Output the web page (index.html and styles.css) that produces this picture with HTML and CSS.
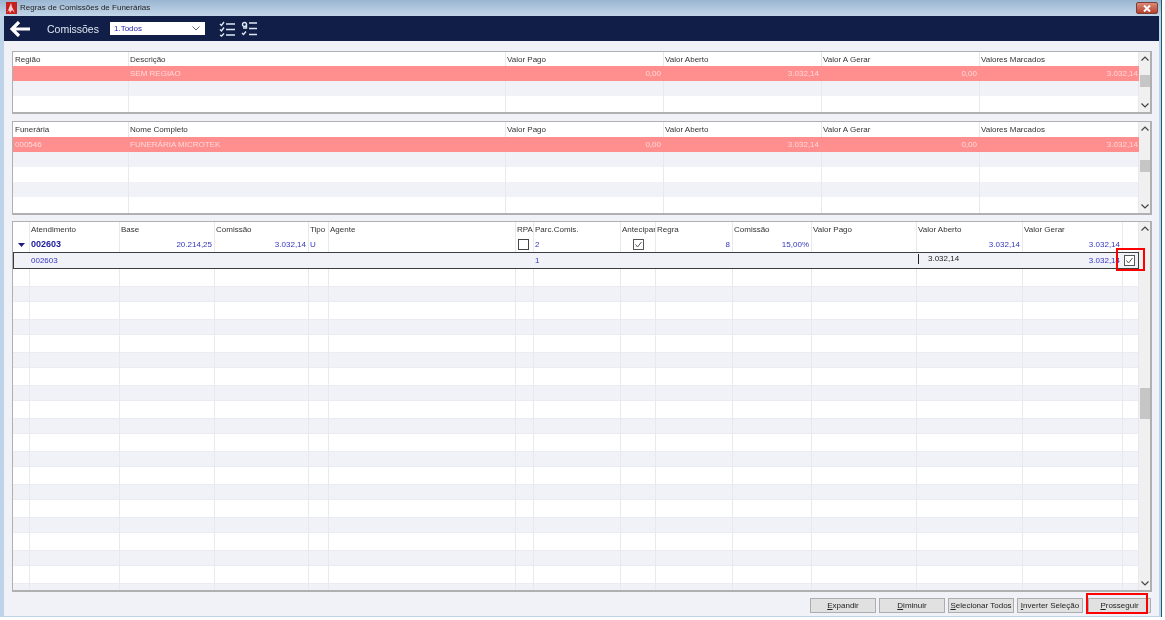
FILE: index.html
```html
<!DOCTYPE html>
<html lang="pt-BR">
<head>
<meta charset="utf-8">
<title>Regras de Comissões de Funerárias</title>
<link rel="stylesheet" href="styles.css">
</head>
<body>
<div class="window">
  <header class="titlebar">
    <svg class="appicon" width="11" height="12" viewBox="0 0 11 12"><rect width="11" height="12" fill="#c8201c"/><path d="M1 11 5 1l1 4 3 6-3-3-2 3-1-3z" fill="#f4d0d0"/></svg>
    <span class="title">Regras de Comissões de Funerárias</span>
    <span class="close"><svg width="8" height="7" viewBox="0 0 8 7"><path d="M1 .5 7 6.500M7 .5 1 6.500" stroke="#fff" stroke-width="2"/></svg></span>
  </header>
  <nav class="toolbar">
    <svg class="back" width="20" height="16" viewBox="0 0 20 16"><path d="M9 1 2 8l7 7M2 8h18" fill="none" stroke="#fff" stroke-width="3.200"/></svg>
    <span class="heading">Comissões</span>
    <div class="select"><span>1.Todos</span><svg width="8" height="5" viewBox="0 0 8 5"><path d="M.5.5 4 4 7.500.5" fill="none" stroke="#666"/></svg></div>
    <svg class="tool tool-a" width="16" height="16" viewBox="0 0 16 16" fill="none" stroke="#dfe6f2" stroke-width="1.400"><path d="M1 3l1.500 1.500L5 1M1 8.500 2.500 10 5 6.500M1 14l1.500 1L5 12.500M7 3h9M7 8.500h9M7 14h9"/></svg>
    <svg class="tool" width="16" height="16" viewBox="0 0 16 16" fill="none" stroke="#dfe6f2" stroke-width="1.400"><circle cx="3.500" cy="3.500" r="2"/><path d="M5.500 3.500V7H2M1 12l1.500 1.500L5 10.500M8 2h8M8 7.500h8M8 13.500h8"/></svg>
  </nav>
  <main class="content">
    <section class="panel panel-a">
      <div class="gridbody">
        <div class="row head cols-a"><span>Região</span><span>Descrição</span><span>Valor Pago</span><span>Valor Aberto</span><span>Valor A Gerar</span><span>Valores Marcados</span></div>
        <div class="row pink cols-a"><span></span><span>SEM REGIAO</span><span class="num">0,00</span><span class="num">3.032,14</span><span class="num">0,00</span><span class="num">3.032,14</span></div>
        <div class="row alt"></div>
        <div class="row"></div>
        <div class="lines cols-a"><i></i><i></i><i></i><i></i><i></i><i></i></div>
      </div>
      <div class="scroll">
        <svg class="chev" width="8" height="5" viewBox="0 0 8 5"><path d="M.5 4.500 4 1l3.500 3.500" fill="none" stroke="#444" stroke-width="1.200"/></svg>
        <div class="track"><div class="thumb thumb-a"></div></div>
        <svg class="chev" width="8" height="5" viewBox="0 0 8 5"><path d="M.5.500 4 4 7.500.5" fill="none" stroke="#444" stroke-width="1.200"/></svg>
      </div>
    </section>
    <section class="panel panel-b">
      <div class="gridbody">
        <div class="row head head-tall cols-a"><span>Funerária</span><span>Nome Completo</span><span>Valor Pago</span><span>Valor Aberto</span><span>Valor A Gerar</span><span>Valores Marcados</span></div>
        <div class="row pink cols-a"><span>000546</span><span>FUNERÁRIA MICROTEK</span><span class="num">0,00</span><span class="num">3.032,14</span><span class="num">0,00</span><span class="num">3.032,14</span></div>
        <div class="row alt"></div>
        <div class="row"></div>
        <div class="row alt"></div>
        <div class="lines cols-a"><i></i><i></i><i></i><i></i><i></i><i></i></div>
      </div>
      <div class="scroll">
        <svg class="chev" width="8" height="5" viewBox="0 0 8 5"><path d="M.5 4.500 4 1l3.500 3.500" fill="none" stroke="#444" stroke-width="1.200"/></svg>
        <div class="track"><div class="thumb thumb-b"></div></div>
        <svg class="chev" width="8" height="5" viewBox="0 0 8 5"><path d="M.5.500 4 4 7.500.5" fill="none" stroke="#444" stroke-width="1.200"/></svg>
      </div>
    </section>
    <section class="panel panel-c">
      <div class="gridbody">
        <div class="row head head-tall cols-c"><span></span><span>Atendimento</span><span>Base</span><span>Comissão</span><span>Tipo</span><span>Agente</span><span>RPA</span><span>Parc.Comis.</span><span>Antecipar</span><span>Regra</span><span>Comissão</span><span>Valor Pago</span><span>Valor Aberto</span><span>Valor Gerar</span><span></span></div>
        <div class="row data cols-c">
          <span class="caret"><svg width="7" height="4" viewBox="0 0 7 4"><path d="M0 0h7L3.500 4z" fill="#1a1a8c"/></svg></span>
          <span class="bold">002603</span><span class="num">20.214,25</span><span class="num">3.032,14</span><span>U</span><span></span>
          <span class="box box-rpa"><svg width="11" height="11" viewBox="0 0 11 11"><rect x=".5" y=".5" width="10" height="10" fill="#fff" stroke="#444"/></svg></span>
          <span>2</span>
          <span class="box"><svg width="11" height="11" viewBox="0 0 11 11"><rect x=".5" y=".5" width="10" height="10" fill="#fff" stroke="#555"/><path d="M2.500 5.500 4.500 8l4-5" fill="none" stroke="#555"/></svg></span>
          <span class="num">8</span><span class="num">15,00%</span><span></span><span class="num">3.032,14</span><span class="num">3.032,14</span><span></span>
        </div>
        <div class="row data selected cols-c">
          <span></span><span>002603</span><span></span><span></span><span></span><span></span><span></span><span>1</span><span></span><span></span><span></span><span></span>
          <span class="editing"><b class="cursor"></b>3.032,14</span><span class="num">3.032,14</span>
          <span class="box box-rpa"><svg width="11" height="11" viewBox="0 0 11 11"><rect x=".5" y=".5" width="10" height="10" fill="#fff" stroke="#555"/><path d="M2.500 5.500 4.500 8l4-5" fill="none" stroke="#555"/></svg></span>
        </div>
        <div class="row tall"></div><div class="row tall alt"></div>
        <div class="row tall"></div><div class="row tall alt"></div>
        <div class="row tall"></div><div class="row tall alt"></div>
        <div class="row tall"></div><div class="row tall alt"></div>
        <div class="row tall"></div><div class="row tall alt"></div>
        <div class="row tall"></div><div class="row tall alt"></div>
        <div class="row tall"></div><div class="row tall alt"></div>
        <div class="row tall"></div><div class="row tall alt"></div>
        <div class="row tall"></div><div class="row tall alt"></div>
        <div class="row tall"></div><div class="row tall alt"></div>
        <div class="lines cols-c"><i></i><i></i><i></i><i></i><i></i><i></i><i></i><i></i><i></i><i></i><i></i><i></i><i></i><i></i><i></i></div>
      </div>
      <div class="scroll">
        <svg class="chev" width="8" height="5" viewBox="0 0 8 5"><path d="M.5 4.500 4 1l3.500 3.500" fill="none" stroke="#444" stroke-width="1.200"/></svg>
        <div class="track"><div class="thumb thumb-c"></div></div>
        <svg class="chev" width="8" height="5" viewBox="0 0 8 5"><path d="M.5.500 4 4 7.500.5" fill="none" stroke="#444" stroke-width="1.200"/></svg>
      </div>
      <div class="mark mark-check"></div>
    </section>
    <footer class="actions">
      <button class="btn"><u>E</u>xpandir</button>
      <button class="btn"><u>D</u>iminuir</button>
      <button class="btn"><u>S</u>elecionar Todos</button>
      <button class="btn"><u>I</u>nverter Seleção</button>
      <button class="btn btn-go"><u>P</u>rosseguir<span class="mark mark-go"></span></button>
    </footer>
  </main>
</div>
</body>
</html>
```
FILE: styles.css
```css
* { box-sizing: border-box; }
html, body { margin: 0; height: 100%; background: #fff; overflow: hidden; }
body { font-family: "Liberation Sans", Arial, sans-serif; font-size: 8px; color: #333; }

.window {
  width: 1162px;
  height: 617px;
  display: flex;
  flex-direction: column;
  padding: 0 1px 1px 4px;
  background: #bcd3e8;
  border-right: 1px solid #1b5a70;
  filter: blur(.4px);
}

.titlebar {
  height: 16px;
  flex: none;
  margin-left: -4px;
  margin-right: -1px;
  padding: 2px 3px 0 6px;
  display: flex;
  align-items: flex-start;
  gap: 3px;
  background: linear-gradient(#9ab6d2, #c3d6e8);
}
.title { font-size: 8px; line-height: 12px; color: #222; }
.close {
  margin-left: auto;
  width: 22px;
  height: 12px;
  display: flex;
  align-items: center;
  justify-content: center;
  border: 1px solid #7a4038;
  border-radius: 2px;
  background: linear-gradient(#dc8a78, #b8402e);
}

.toolbar {
  height: 25px;
  flex: none;
  display: flex;
  align-items: center;
  padding-left: 6px;
  background: #111f48;
  color: #dfe6f2;
  margin-right: 1px;
}
.heading { margin-left: 17px; font-size: 10.500px; width: 63px; }
.select {
  width: 95px;
  height: 13px;
  padding: 0 5px 0 4px;
  display: flex;
  align-items: center;
  justify-content: space-between;
  background: #fff;
  color: #2626b0;
  font-size: 8px;
}
.tool-a { margin-left: 14px; margin-right: 6px; }

.content {
  flex: 1;
  display: flex;
  flex-direction: column;
  padding: 10px 7px 0 8px;
  background: #f0f2f8;
  margin-right: 1px;
}

.panel {
  position: relative;
  flex: none;
  display: flex;
  background: #fff;
  border: 1px solid #b0b0b0;
  border-right-width: 2px;
  border-bottom-width: 2px;
}
.panel-a { height: 63px; }
.panel-b { height: 94px; margin-top: 7px; }
.panel-c { height: 371px; margin-top: 6px; }

.gridbody { position: relative; flex: 1; overflow: hidden; min-width: 0; }
.row { height: 15px; line-height: 15px; }
.row > span { padding: 0 2px 0 1px; white-space: nowrap; overflow: hidden; min-width: 0; }
.row > span:first-child { padding-left: 2px; }
.head { height: 14px; line-height: 14px; color: #333; background: #fff; }
.head > span { padding-top: 1px; }
.head-tall { height: 15px; }
.pink { position: relative; z-index: 1; background: #ff8f8f; color: #ffd8d8; }
.alt { background: #f1f2f8; }
.tall { height: 16.500px; }
.tall.alt { border-top: 1px solid #ebecf1; border-bottom: 1px solid #ebecf1; }
.cols-a { display: grid; grid-template-columns: 116px 377px 158px 158px 158px 159px; }
.cols-c { display: grid; grid-template-columns: 17px 90px 95px 94px 20px 187px 18px 87px 35px 77px 79px 105px 106px 100px 16px; }
.num { text-align: right; }
.pink .num { padding-right: 3px; }
.pink .num:last-child { padding-right: 1px; }

.data { color: #3535bd; }
.bold { font-weight: 700; color: #1a1a9c; font-size: 9px; }
.caret, .box { display: flex; align-items: center; justify-content: center; }
.row > .box-rpa { padding: 0 3px 0 0; }
.panel-c .cols-c > .num { padding-right: 3px; }
.selected {
  position: relative;
  z-index: 2;
  height: 17px;
  line-height: 15px;
  background: #f1f2f8;
  border: 1px solid #3d3d3d;
  border-width: 1px 0;
  box-shadow: inset 1px 0 #3d3d3d, inset -1px 0 #3d3d3d;
}
.editing { color: #222; display: flex; gap: 9px; margin-top: -2px; }
.cursor { width: 1px; height: 10px; margin-top: 3px; background: #222; }

.lines { position: absolute; inset: 0; pointer-events: none; }
.lines i { border-right: 1px solid #e8e9ee; }

.scroll {
  width: 11px;
  flex: none;
  display: flex;
  flex-direction: column;
  align-items: center;
  background: #f0f0f0;
}
.chev { flex: none; margin: 4px 0; }
.track { flex: 1; width: 100%; padding-left: 1px; }
.thumb { width: 100%; background: #c6c6c6; }
.thumb-a { height: 12px; margin-top: 10px; }
.thumb-b { height: 12px; margin-top: 25px; }
.thumb-c { height: 31px; margin-top: 153px; }

.actions {
  display: flex;
  justify-content: flex-end;
  gap: 3px;
  margin-top: 6px;
  padding-right: 1px;
}
.btn {
  position: relative;
  width: 66px;
  height: 15px;
  padding: 0;
  font: 8px/13px "Liberation Sans", Arial, sans-serif;
  color: #222;
  background: #e1e1e1;
  border: 1px solid #adadad;
}
.btn-go { margin-left: 2px; width: 63px; }

.mark { position: absolute; border: 2px solid #f00; pointer-events: none; z-index: 5; }
.mark-check { left: 1103px; top: 26px; width: 29px; height: 23px; }
.mark-go { left: -3px; top: -6px; width: 62px; height: 21px; }
```
